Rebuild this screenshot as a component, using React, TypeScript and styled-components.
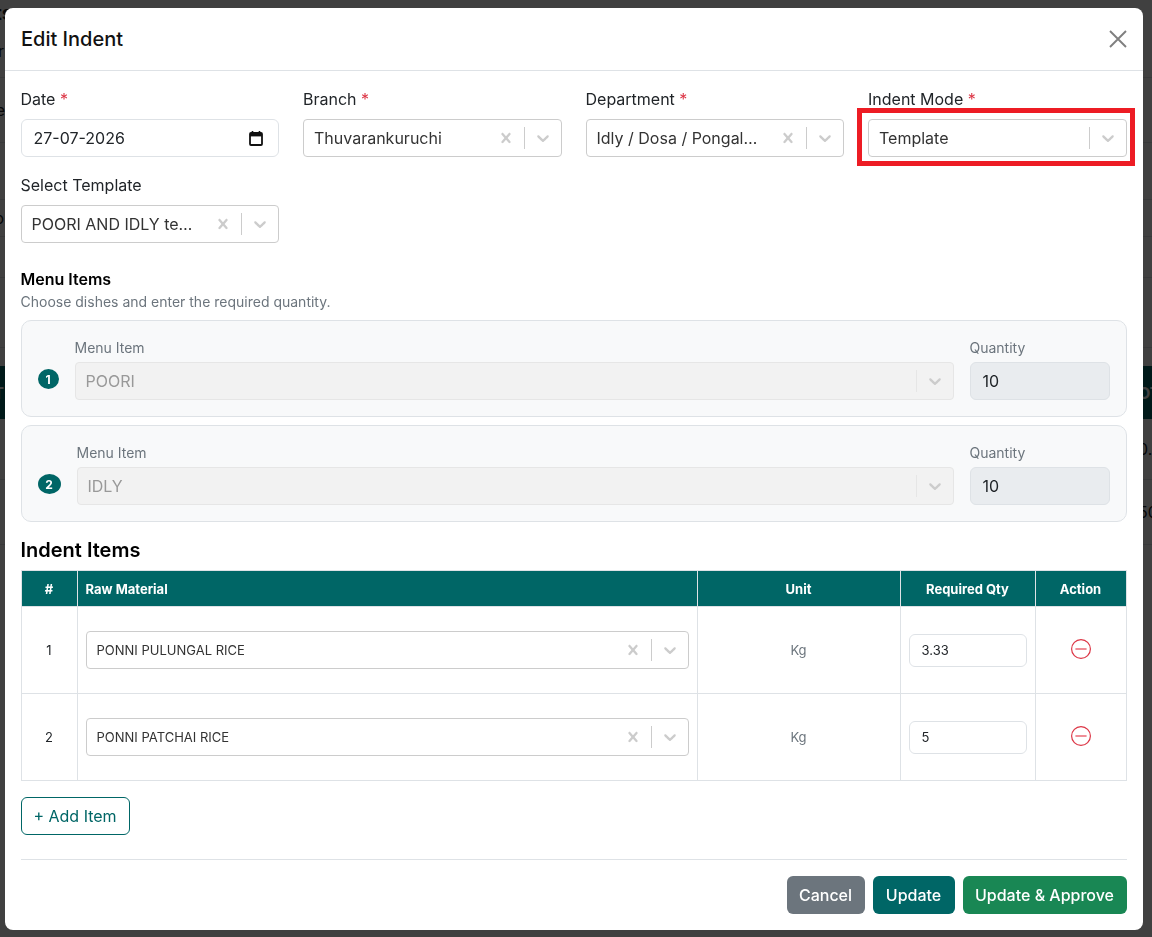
import styled, { createGlobalStyle } from 'styled-components'

const GlobalStyle = createGlobalStyle`
  html, body {
    margin: 0;
    height: 100%;
    overflow: hidden;
    background: #fff;
    font-family: Inter, "Noto Sans", "Liberation Sans", sans-serif;
    color: #212529;
  }
  * {
    box-sizing: border-box;
  }
`

const teal = '#006666'

const crossPath =
  'M14.348 14.849c-0.469 0.469-1.229 0.469-1.697 0l-2.651-3.030-2.651 3.029c-0.469 0.469-1.229 0.469-1.697 0-0.469-0.469-0.469-1.229 0-1.697l2.758-3.15-2.759-3.152c-0.469-0.469-0.469-1.228 0-1.697s1.228-0.469 1.697 0l2.652 3.031 2.651-3.031c0.469-0.469 1.228-0.469 1.697 0s0.469 1.229 0 1.697l-2.758 3.152 2.758 3.15c0.469 0.469 0.469 1.229 0 1.698z'
const chevronPath =
  'M4.516 7.548c0.436-0.446 1.043-0.481 1.576 0l3.908 3.747 3.908-3.747c0.533-0.481 1.141-0.446 1.576 0 0.436 0.445 0.408 1.197 0 1.615-0.406 0.418-4.695 4.502-4.695 4.502-0.217 0.223-0.502 0.335-0.789 0.335s-0.572-0.112-0.789-0.335c0 0-4.287-4.084-4.695-4.502s-0.436-1.17 0-1.615z'

function SelectBox({
  value,
  clearable = true,
  disabled = false,
  small = false,
}: {
  value: string
  clearable?: boolean
  disabled?: boolean
  small?: boolean
}) {
  return (
    <SelectControl $disabled={disabled}>
      <SelectValue $disabled={disabled} $small={small}>
        {value}
      </SelectValue>
      {clearable && (
        <Indicator>
          <svg width="20" height="20" viewBox="0 0 20 20" fill="#ccc">
            <path d={crossPath} />
          </svg>
        </Indicator>
      )}
      <IndicatorSep $disabled={disabled} />
      <Indicator>
        <svg width="20" height="20" viewBox="0 0 20 20" fill="#ccc">
          <path d={chevronPath} />
        </svg>
      </Indicator>
    </SelectControl>
  )
}

function RemoveIcon() {
  return (
    <svg width="20" height="20" viewBox="0 0 20 20" fill="none">
      <circle cx="10" cy="10" r="9.4" stroke="#dc3545" strokeWidth="1.2" />
      <path d="M5 10h10" stroke="#ea6a76" strokeWidth="1.6" strokeLinecap="round" />
    </svg>
  )
}

const menuItems = [
  { id: 1, name: 'POORI', qty: '10', wide: false },
  { id: 2, name: 'IDLY', qty: '10', wide: true },
]

const indentItems = [
  { id: 1, name: 'PONNI PULUNGAL RICE', unit: 'Kg', qty: '3.33' },
  { id: 2, name: 'PONNI PATCHAI RICE', unit: 'Kg', qty: '5' },
]

function App() {
  return (
    <>
      <GlobalStyle />
      <BackPage>
        <BackRow $height={78}>
          <BackStack>
            <BackHeading>Indents</BackHeading>
            <BackLeft $width={4}>Manager</BackLeft>
          </BackStack>
        </BackRow>
        <BackRow $height={65}>
          <BackLeft $width={5}>Date</BackLeft>
        </BackRow>
        <BackRow $height={57} />
        <BackRow $height={37}>
          <BackLeft $width={4}>Info</BackLeft>
        </BackRow>
        <BackRow $height={41} />
        <BackRow $height={70} />
        <BackGap />
        <BackHead>
          <BackLeft $width={4}>NT</BackLeft>
          <BackRight>OTAL</BackRight>
        </BackHead>
        <BackRow $height={61}>
          <BackRight>0.00</BackRight>
        </BackRow>
        <BackRow $height={65}>
          <BackRight>50</BackRight>
        </BackRow>
      </BackPage>

      <Overlay>
        <Modal>
          <ModalHeader>
            <ModalTitle>Edit Indent</ModalTitle>
            <CloseButton aria-label="Close">
              <svg width="20" height="20" viewBox="0 0 20 20" fill="none">
                <path d="M2 2l16 16M18 2L2 18" stroke="#7f7f7f" strokeWidth="1.9" />
              </svg>
            </CloseButton>
          </ModalHeader>

          <ModalBody>
            <FieldGrid>
              <Field>
                <FieldLabel>
                  Date <Required>*</Required>
                </FieldLabel>
                <DateBox>
                  <span>27-07-2026</span>
                  <svg width="14" height="15" viewBox="0 0 14 15" fill="none">
                    <path d="M3.5 0v3M10.5 0v3" stroke="#111" strokeWidth="1.6" />
                    <rect x="1" y="2" width="12" height="12" rx="1" stroke="#111" strokeWidth="1.8" />
                    <path d="M1 4.2h12" stroke="#111" strokeWidth="2.4" />
                  </svg>
                </DateBox>
              </Field>
              <Field>
                <FieldLabel>
                  Branch <Required>*</Required>
                </FieldLabel>
                <SelectBox value="Thuvarankuruchi" />
              </Field>
              <Field>
                <FieldLabel>
                  Department <Required>*</Required>
                </FieldLabel>
                <SelectBox value="Idly / Dosa / Pongal / Vada" />
              </Field>
              <Field>
                <FieldLabel>
                  Indent Mode <Required>*</Required>
                </FieldLabel>
                <Highlighted>
                  <SelectBox value="Template" clearable={false} />
                  <RedFrame />
                </Highlighted>
              </Field>
              <Field>
                <FieldLabel>Select Template</FieldLabel>
                <SelectBox value="POORI AND IDLY template" />
              </Field>
            </FieldGrid>

            <SectionTitle>Menu Items</SectionTitle>
            <SectionHint>Choose dishes and enter the required quantity.</SectionHint>

            <MenuList>
              {menuItems.map((item) => (
                <MenuCard key={item.id}>
                  <Badge $wide={item.wide}>{item.id}</Badge>
                  <MenuField>
                    <SmallLabel>Menu Item</SmallLabel>
                    <SelectBox value={item.name} clearable={false} disabled />
                  </MenuField>
                  <QtyField>
                    <SmallLabel>Quantity</SmallLabel>
                    <QtyBox>{item.qty}</QtyBox>
                  </QtyField>
                </MenuCard>
              ))}
            </MenuList>

            <ItemsTitle>Indent Items</ItemsTitle>
            <ItemsTable>
              <colgroup>
                <col width="56" />
                <col width="620" />
                <col width="203" />
                <col width="135" />
                <col />
              </colgroup>
              <thead>
                <tr>
                  <HeadCell>#</HeadCell>
                  <HeadCell $left>Raw Material</HeadCell>
                  <HeadCell>Unit</HeadCell>
                  <HeadCell>Required Qty</HeadCell>
                  <HeadCell>Action</HeadCell>
                </tr>
              </thead>
              <tbody>
                {indentItems.map((row) => (
                  <tr key={row.id}>
                    <BodyCell>{row.id}</BodyCell>
                    <BodyCell>
                      <SelectBox value={row.name} small />
                    </BodyCell>
                    <BodyCell $muted>{row.unit}</BodyCell>
                    <BodyCell>
                      <RowInput>{row.qty}</RowInput>
                    </BodyCell>
                    <BodyCell>
                      <RemoveButton aria-label="Remove">
                        <RemoveIcon />
                      </RemoveButton>
                    </BodyCell>
                  </tr>
                ))}
              </tbody>
            </ItemsTable>

            <AddButton>+ Add Item</AddButton>

            <Footer>
              <ActionButton $bg="#6c757d" $width={78}>
                Cancel
              </ActionButton>
              <ActionButton $bg={teal} $width={82}>
                Update
              </ActionButton>
              <ActionButton $bg="#198754" $width={164}>
                Update &amp; Approve
              </ActionButton>
            </Footer>
          </ModalBody>
        </Modal>
      </Overlay>
    </>
  )
}

export default App

const BackPage = styled.div`
  height: 937px;
  overflow: hidden;
  background: #fff;
`

const BackRow = styled.div<{ $height: number }>`
  display: flex;
  align-items: center;
  height: ${(props) => props.$height}px;
  border-bottom: 1px solid #dee2e6;
  font-size: 16px;
`

const BackStack = styled.div`
  display: flex;
  flex-direction: column;
  gap: 16px;
  align-self: flex-start;
  padding-top: 1px;
`

const BackHeading = styled.span`
  display: flex;
  justify-content: flex-end;
  width: 13px;
  font-size: 20px;
  font-weight: 700;
  white-space: nowrap;
`

const BackLeft = styled.span<{ $width: number }>`
  display: flex;
  justify-content: flex-end;
  width: ${(props) => props.$width}px;
  white-space: nowrap;
`

const BackRight = styled.span`
  width: 14px;
  margin-left: auto;
  white-space: nowrap;
`

const BackGap = styled.div`
  height: 18px;
`

const BackHead = styled.div`
  display: flex;
  align-items: center;
  height: 53px;
  background: ${teal};
  color: #fff;
  font-size: 16px;
  font-weight: 700;
`

const Overlay = styled.div`
  position: fixed;
  inset: 0;
  display: flex;
  padding: 8px 9px 7px 4.5px;
  background: rgba(0, 0, 0, 0.75);
`

const Modal = styled.div`
  flex: 1;
  min-width: 0;
  display: flex;
  flex-direction: column;
  background: #fff;
  border-radius: 8px;
`

const ModalHeader = styled.div`
  display: flex;
  justify-content: space-between;
  align-items: center;
  height: 63px;
  padding: 0 15px 1px 16.5px;
  border-bottom: 1px solid #dee2e6;
`

const ModalTitle = styled.h5`
  margin: 0;
  font-size: 20px;
  font-weight: 500;
  color: #111;
`

const CloseButton = styled.button`
  display: flex;
  padding: 0;
  border: none;
  background: none;
`

const ModalBody = styled.div`
  padding: 16px 16.5px 16px 16px;
`

const FieldGrid = styled.div`
  display: grid;
  grid-template-columns: repeat(4, 1fr);
  gap: 16px 24px;
`

const Field = styled.div`
  min-width: 0;
`

const FieldLabel = styled.div`
  height: 24px;
  margin-bottom: 8px;
  font-size: 16px;
  line-height: 24px;
`

const Required = styled.span`
  color: #dc3545;
`

const DateBox = styled.div`
  display: flex;
  justify-content: space-between;
  align-items: center;
  height: 38px;
  padding: 0 15px 0 12px;
  border: 1px solid #dee2e6;
  border-radius: 6px;
  font-size: 16px;
`

const SelectControl = styled.div<{ $disabled: boolean }>`
  display: flex;
  align-items: center;
  height: 38px;
  border: 1px solid ${(props) => (props.$disabled ? '#e6e6e6' : '#ccc')};
  border-radius: 4px;
  background: ${(props) => (props.$disabled ? '#f2f2f2' : '#fff')};
`

const SelectValue = styled.div<{ $disabled: boolean; $small: boolean }>`
  flex: 1;
  min-width: 0;
  padding: 0 10px;
  overflow: hidden;
  white-space: nowrap;
  text-overflow: ellipsis;
  text-align: left;
  font-size: ${(props) => (props.$small ? '13px' : '16px')};
  color: ${(props) => (props.$disabled ? '#999' : '#333')};
`

const Indicator = styled.div`
  display: flex;
  flex: none;
  padding: 8px;
`

const IndicatorSep = styled.span<{ $disabled: boolean }>`
  flex: none;
  width: 1px;
  height: 22px;
  background: ${(props) => (props.$disabled ? '#e6e6e6' : '#ccc')};
`

const Highlighted = styled.div`
  position: relative;
`

const RedFrame = styled.div`
  position: absolute;
  inset: -11px -8px -9px -11px;
  border: 5px solid #ed1c24;
  pointer-events: none;
`

const SectionTitle = styled.div`
  margin-top: 25px;
  font-size: 16px;
  font-weight: 600;
  line-height: 22px;
  color: #000;
`

const SectionHint = styled.div`
  margin-top: 2px;
  font-size: 14px;
  line-height: 20px;
  color: #6c757d;
`

const MenuList = styled.div`
  display: flex;
  flex-direction: column;
  gap: 8px;
  margin-top: 8px;
`

const MenuCard = styled.div`
  display: flex;
  gap: 16px;
  padding: 16px;
  border: 1px solid #dee2e6;
  border-radius: 10px;
  background: #f8f9fa;
`

const Badge = styled.div<{ $wide: boolean }>`
  flex: none;
  align-self: flex-end;
  display: flex;
  justify-content: center;
  align-items: center;
  width: ${(props) => (props.$wide ? 23 : 21)}px;
  height: 20px;
  margin-bottom: 11px;
  border-radius: 50%;
  background: ${teal};
  color: #fff;
  font-size: 12px;
  font-weight: 700;
`

const MenuField = styled.div`
  flex: 1;
  min-width: 0;
`

const QtyField = styled.div`
  flex: none;
  width: 140px;
`

const SmallLabel = styled.div`
  height: 21px;
  margin-bottom: 4px;
  font-size: 14px;
  line-height: 21px;
  color: #6c757d;
`

const QtyBox = styled.div`
  display: flex;
  align-items: center;
  height: 38px;
  padding: 0 12px;
  border: 1px solid #dee2e6;
  border-radius: 6px;
  background: #e9ecef;
  font-size: 16px;
`

const ItemsTitle = styled.h5`
  margin: 13px 0 5px;
  font-size: 20px;
  font-weight: 600;
  line-height: 30px;
  color: #000;
`

const ItemsTable = styled.table`
  width: 100%;
  table-layout: fixed;
  border-collapse: collapse;
`

const HeadCell = styled.th<{ $left?: boolean }>`
  height: 36px;
  padding: 0 8px;
  border: 1px solid #dee2e6;
  background: ${teal};
  color: #fff;
  font-size: 13px;
  font-weight: 700;
  text-align: ${(props) => (props.$left ? 'left' : 'center')};
`

const BodyCell = styled.td<{ $muted?: boolean }>`
  height: 87px;
  padding: 8px;
  border: 1px solid #dee2e6;
  font-size: 13px;
  text-align: center;
  color: ${(props) => (props.$muted ? '#6c757d' : '#212529')};
`

const RowInput = styled.div`
  display: flex;
  align-items: center;
  height: 33px;
  padding: 0 12px;
  border: 1px solid #dee2e6;
  border-radius: 6px;
  font-size: 13px;
  text-align: left;
`

const RemoveButton = styled.button`
  display: inline-flex;
  padding: 0;
  margin-bottom: 2px;
  border: none;
  background: none;
`

const AddButton = styled.button`
  display: block;
  width: 109px;
  height: 38px;
  margin-top: 16px;
  padding: 0;
  border: 1px solid ${teal};
  border-radius: 6px;
  background: #fff;
  color: ${teal};
  font-family: inherit;
  font-size: 16px;
`

const Footer = styled.div`
  display: flex;
  justify-content: flex-end;
  gap: 8px;
  margin-top: 24px;
  padding-top: 16px;
  border-top: 1px solid #dee2e6;
`

const ActionButton = styled.button<{ $bg: string; $width: number }>`
  width: ${(props) => props.$width}px;
  height: 38px;
  padding: 0;
  border: none;
  border-radius: 6px;
  background: ${(props) => props.$bg};
  color: #fff;
  font-family: inherit;
  font-size: 16px;
  font-weight: 500;
`
